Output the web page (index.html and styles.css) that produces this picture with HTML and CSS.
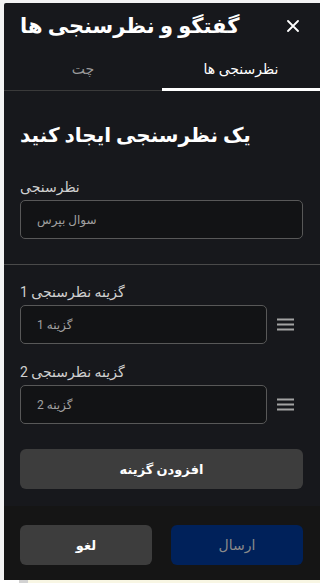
FILE: index.html
```html
<!DOCTYPE html>
<html lang="fa">
<head>
<meta charset="utf-8">
<link rel="stylesheet" href="styles.css">
</head>
<body>
<div class="panel">
  <header class="header">
    <h1 class="title">گفتگو و نظرسنجی ها</h1>
    <button class="close" aria-label="close">
      <svg width="12" height="12" viewBox="0 0 12 12"><path d="M1 1L11 11M11 1L1 11" stroke="#fff" stroke-width="1.8" stroke-linecap="round"/></svg>
    </button>
  </header>
  <nav class="tabs">
    <div class="tab">چت</div>
    <div class="tab active">نظرسنجی ها</div>
  </nav>
  <main class="content">
    <section class="section top">
      <h2 class="heading">یک نظرسنجی ایجاد کنید</h2>
      <label class="label">نظرسنجی</label>
      <input class="field" placeholder="سوال بپرس">
    </section>
    <div class="divider"></div>
    <section class="section options">
      <label class="label">گزینه نظرسنجی 1</label>
      <div class="row">
        <input class="field" placeholder="گزینه 1">
        <span class="drag"><svg width="17" height="13" viewBox="0 0 17 13"><path d="M0 1.5H17M0 6.5H17M0 11.5H17" stroke="#a3a3a3" stroke-width="2"/></svg></span>
      </div>
      <label class="label second">گزینه نظرسنجی 2</label>
      <div class="row">
        <input class="field" placeholder="گزینه 2">
        <span class="drag"><svg width="17" height="13" viewBox="0 0 17 13"><path d="M0 1.5H17M0 6.5H17M0 11.5H17" stroke="#a3a3a3" stroke-width="2"/></svg></span>
      </div>
      <button class="btn add">افزودن گزینه</button>
    </section>
  </main>
  <footer class="footer">
    <button class="btn cancel">لغو</button>
    <button class="btn submit">ارسال</button>
  </footer>
</div>
<div class="below">
  <span class="b1"></span><span class="b2"></span><span class="b3"></span>
</div>
</body>
</html>
```
FILE: styles.css
```css
* { box-sizing: border-box; }
html, body { margin: 0; padding: 0; }
body {
  background: #f3f3f3;
  width: 320px;
  height: 583px;
  overflow: hidden;
  font-family: Roboto, "DejaVu Sans", sans-serif;
}
.panel {
  margin: 3px 0 0 4px;
  width: 316px;
  height: 577px;
  background: #17181c;
  display: flex;
  flex-direction: column;
  border-top-left-radius: 2px;
}
.header {
  height: 46px;
  display: flex;
  align-items: center;
  justify-content: space-between;
  padding: 0 20px 0 16px;
}
.title {
  margin: 0;
  font-size: 21px;
  font-weight: bold;
  color: #fff;
  line-height: 28px;
}
.close {
  background: none;
  border: 0;
  padding: 0;
  width: 14px;
  height: 14px;
  display: flex;
  align-items: center;
  justify-content: center;
}
.tabs {
  display: flex;
  height: 42px;
  border-bottom: 1px solid #3a3a3a;
}
.tab {
  flex: 1;
  display: flex;
  align-items: center;
  justify-content: center;
  font-size: 14px;
  color: #9a9a9a;
  padding-bottom: 2px;
}
.tab.active {
  color: #fff;
  border-bottom: 3px solid #fff;
  margin-bottom: -1px;
  padding-bottom: 0;
}
.content {
  flex: 1;
  display: flex;
  flex-direction: column;
}
.section {
  padding: 0 17px 0 16px;
  display: flex;
  flex-direction: column;
}
.top { padding-top: 32px; padding-bottom: 25px; }
.heading {
  margin: 0 0 31px;
  font-size: 20px;
  line-height: 24px;
  font-weight: bold;
  color: #fff;
}
.label {
  font-size: 14px;
  line-height: 18px;
  color: #d0d0d0;
  margin-bottom: 4px;
}
.label.second { margin-top: 19px; }
.field {
  height: 39px;
  width: 100%;
  background: #121315;
  border: 1px solid #585858;
  border-radius: 5px;
  padding: 0 16px;
  font-family: Roboto, "DejaVu Sans", sans-serif;
  font-size: 12px;
  color: #ddd;
  outline: none;
}
.field::placeholder { color: #a0a0a0; }
.divider { height: 1px; background: #4a4a4a; }
.options { padding-top: 18px; }
.row { display: flex; align-items: center; }
.row .field { flex: 1; width: auto; }
.drag {
  width: 36px;
  padding-left: 10px;
  display: flex;
  align-items: center;
}
.btn {
  border: 0;
  border-radius: 6px;
  height: 40px;
  font-family: Roboto, "DejaVu Sans", sans-serif;
  font-size: 13px;
  font-weight: bold;
  color: #fff;
  background: #3d3d3d;
}
.add { margin-top: 25px; width: 100%; }
.footer {
  background: #151515;
  display: flex;
  gap: 19px;
  padding: 19px 17px 15px 16px;
}
.footer .btn { flex: 1; }
.submit {
  background: #00215a;
  color: #8a8a8a;
  font-weight: normal;
  font-size: 14px;
}
.below { display: flex; height: 3px; }
.b1 { width: 19px; background: #fff; }
.b2 { width: 9px; background: #d2d2d2; }
.b3 { flex: 1; background: #f8f6e4; }
```
